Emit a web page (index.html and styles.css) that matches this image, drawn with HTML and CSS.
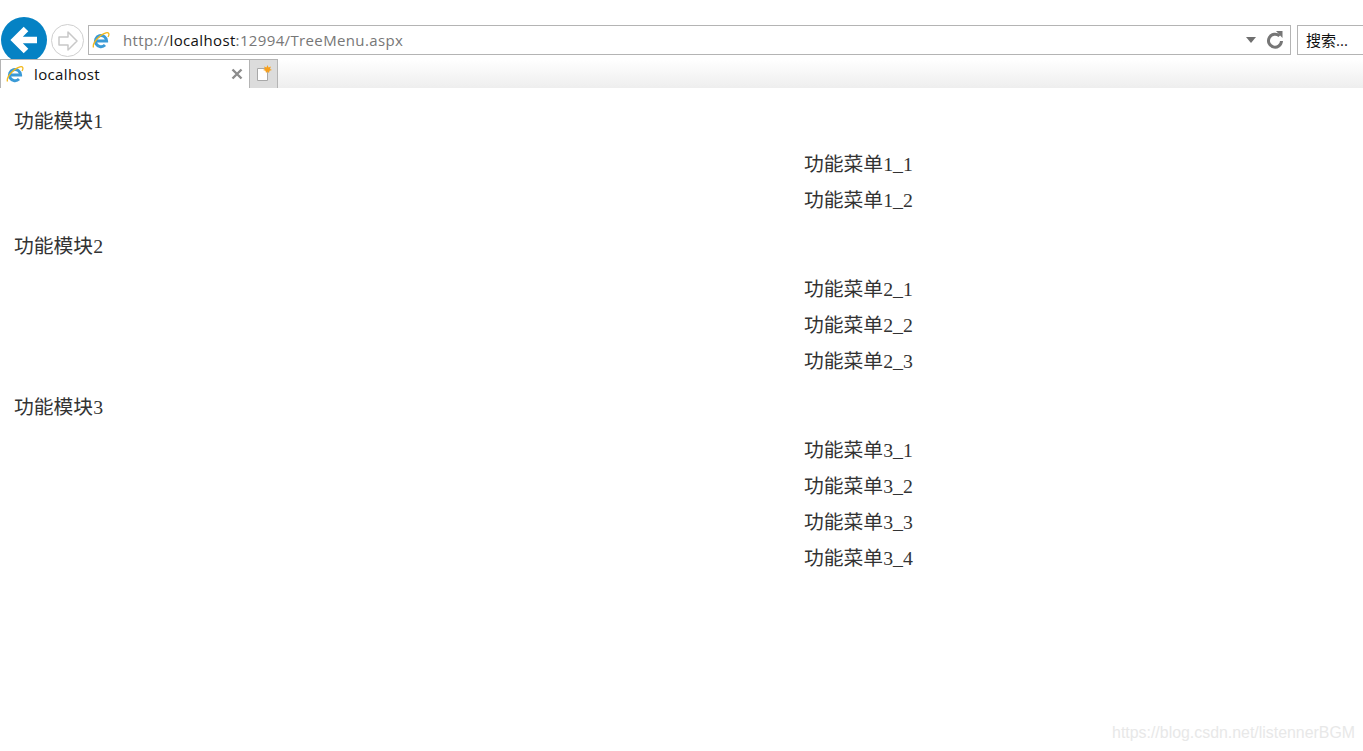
FILE: index.html
```html
<!DOCTYPE html>
<html>
<head>
    <meta charset="UTF-8" />
    <title>localhost</title>
    <link rel="stylesheet" href="styles.css">
</head>
<body>
<div class="toolbar">
    <div class="back">
        <svg width="46" height="46" viewBox="0 0 46 46"><path d="M25 12 L14 23 L25 34 M15 23 H36" fill="none" stroke="#fff" stroke-width="6.500"/></svg>
    </div>
    <div class="forward">
        <svg width="30" height="30" viewBox="0 0 30 30"><path d="M15 6 L24 15 L15 24 V19 H6 V11 H15 Z" fill="#fff" stroke="#c8c8c8" stroke-width="1.500" stroke-linejoin="round"/></svg>
    </div>
    <div class="address">
        <svg class="ie" width="18" height="18" viewBox="0 0 18 18"><use href="#ie-logo"/></svg>
        <span class="url">http://<b>localhost</b>:12994/TreeMenu.aspx</span>
        <span class="drop"></span>
        <svg class="refresh" width="20" height="20" viewBox="0 0 20 20"><path d="M14.500 6 A6.500 6.500 0 1 0 16.500 11" fill="none" stroke="#767676" stroke-width="3"/><path d="M11 1 H17.500 V8 Z" fill="#767676"/></svg>
    </div>
    <div class="search">搜索...</div>
</div>
<div class="tabstrip">
    <div class="tab">
        <svg class="ie" width="18" height="18" viewBox="0 0 18 18">
            <g id="ie-logo">
                <path d="M4 10 H14.600 A5.600 5.600 0 1 0 13 14" fill="none" stroke="#3a9ad6" stroke-width="3"/>
                <path d="M1.500 16.500 C0 12.500 7 4 14 1.800 C16.800 1 17.800 3 16 6" fill="none" stroke="#f2b81c" stroke-width="1.300"/>
            </g>
        </svg>
        <span class="tab-title">localhost</span>
        <svg class="close" width="12" height="12" viewBox="0 0 12 12"><path d="M1.500 1.500 L10.500 10.500 M10.500 1.500 L1.500 10.500" stroke="#8c8c8c" stroke-width="2.400"/></svg>
    </div>
    <div class="newtab">
        <svg width="18" height="18" viewBox="0 0 18 18"><path d="M2.500 3.500 H12.500 V15.500 H2.500 Z" fill="#fff" stroke="#a8a8a8"/><path d="M12.500 0 L13.500 2.600 L16 1.500 L15 4 L17 5 L14.500 5.700 L14 8 L12.500 6.500 L11 8 L10.500 5.700 L8 5 L10 4 L9 1.500 L11.500 2.600 Z" fill="#f7a01c"/></svg>
    </div>
</div>
<div class="content">
    <div class="module">功能模块1</div>
    <ul>
        <li>功能菜单1_1</li>
        <li>功能菜单1_2</li>
    </ul>
    <div class="module">功能模块2</div>
    <ul>
        <li>功能菜单2_1</li>
        <li>功能菜单2_2</li>
        <li>功能菜单2_3</li>
    </ul>
    <div class="module">功能模块3</div>
    <ul>
        <li>功能菜单3_1</li>
        <li>功能菜单3_2</li>
        <li>功能菜单3_3</li>
        <li>功能菜单3_4</li>
    </ul>
</div>
<div class="watermark">https://blog.csdn.net/listennerBGM</div>
</body>
</html>
```

FILE: styles.css
```css
*{
    margin: 0;
    padding: 0;
    box-sizing: border-box;
}
html, body{
    height: 100%;
    overflow: hidden;
    background-color: #fff;
}
ul, li{list-style: none;}
.toolbar{
    display: flex;
    align-items: flex-start;
    height: 59px;
    padding: 17px 0 0 1px;
    font-family: "Open Sans", "Noto Sans CJK SC", sans-serif;
}
.back{
    flex: none;
    width: 46px;
    height: 46px;
    border-radius: 50%;
    background-color: #0582c4;
}
.forward{
    flex: none;
    display: flex;
    align-items: center;
    justify-content: center;
    width: 33px;
    height: 33px;
    margin: 7px 0 0 4px;
    border: 1px solid #cfcfcf;
    border-radius: 50%;
}
.address{
    flex: none;
    display: flex;
    align-items: center;
    width: 1203px;
    height: 30px;
    margin: 8px 0 0 4px;
    padding: 0 5px 0 3px;
    border: 1px solid #b4b4b4;
}
.url{
    flex: 1;
    margin-left: 13px;
    font-size: 15px;
    letter-spacing: 0.36px;
    color: #777;
}
.url b{
    font-weight: normal;
    color: #111;
}
.drop{
    width: 0;
    height: 0;
    margin-right: 9px;
    border-top: 6px solid #6f6f6f;
    border-left: 5px solid transparent;
    border-right: 5px solid transparent;
}
.search{
    flex: none;
    width: 66px;
    height: 30px;
    margin: 8px 0 0 6px;
    padding-left: 8px;
    border: 1px solid #b4b4b4;
    border-right: 0;
    font-size: 15px;
    line-height: 29px;
    color: #111;
}
/* the tab row sits over the bottom of the round back button */
.tabstrip{
    position: relative;
    display: flex;
    height: 29px;
    background: linear-gradient(#fff, #eeeeee);
    font-family: "Open Sans", sans-serif;
}
.tab{
    display: flex;
    align-items: center;
    width: 250px;
    padding: 0 6px 0 5px;
    background-color: #fff;
    border-top: 1px solid #b4b4b4;
    border-left: 1px solid #b4b4b4;
    border-right: 1px solid #b4b4b4;
}
.tab-title{
    flex: 1;
    margin-left: 10px;
    font-size: 15px;
    letter-spacing: 0.36px;
    color: #111;
}
.newtab{
    display: flex;
    align-items: center;
    justify-content: center;
    width: 28px;
    background-color: #dcdcdc;
    border-top: 1px solid #b4b4b4;
    border-right: 1px solid #b4b4b4;
}
.content{
    padding: 5px 14px 0;
    font-family: "Liberation Serif", "Noto Sans CJK SC", serif;
    font-size: 19.8px;
    color: #333;
}
.module{
    height: 53px;
    padding-top: 4px;
    line-height: 49px;
}
ul{
    margin-left: 790px;
}
li{
    height: 36px;
    line-height: 36px;
}
.watermark{
    position: absolute;
    right: 8px;
    bottom: 9px;
    font-family: "Liberation Sans", sans-serif;
    font-size: 15.9px;
    color: #e8e8e8;
}
```
